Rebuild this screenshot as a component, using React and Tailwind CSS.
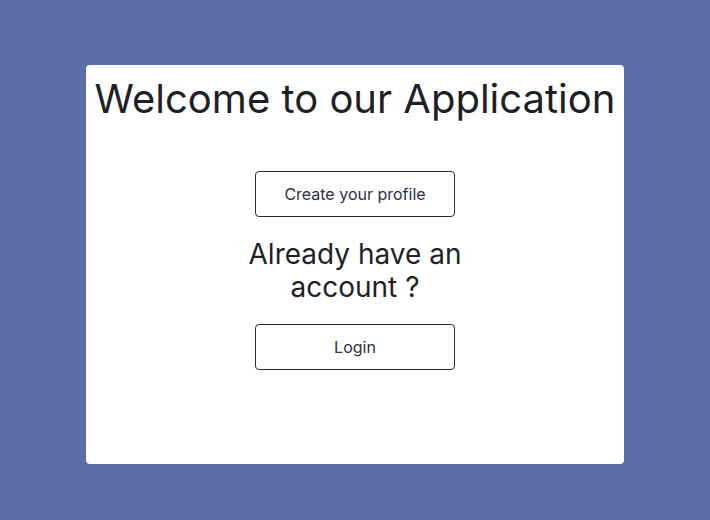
export default function App() {
  return (
    <div
      className="min-h-[520px] w-full bg-[#5c6ea8] pt-[65px] flex justify-center"
      style={{ fontFamily: 'Inter, "Noto Sans", sans-serif' }}
    >
      <div className="w-[538px] h-[399px] bg-white rounded-[4px] flex flex-col items-center pt-[10px]">
        <h1 className="text-[40px] leading-[48px] text-[#1f1f28] font-normal">Welcome to our Application</h1>
        <button className="mt-[48px] w-[200px] h-[46px] border border-[#2a2a3c] rounded-[4px] text-[16px] text-[#2f2f40]">
          Create your profile
        </button>
        <p className="mt-[21px] w-[240px] text-center text-[28px] leading-[33px] text-[#1f1f28]">
          Already have an account ?
        </p>
        <button className="mt-[20px] w-[200px] h-[46px] border border-[#2a2a3c] rounded-[4px] text-[16px] text-[#2f2f40]">
          Login
        </button>
      </div>
    </div>
  );
}
